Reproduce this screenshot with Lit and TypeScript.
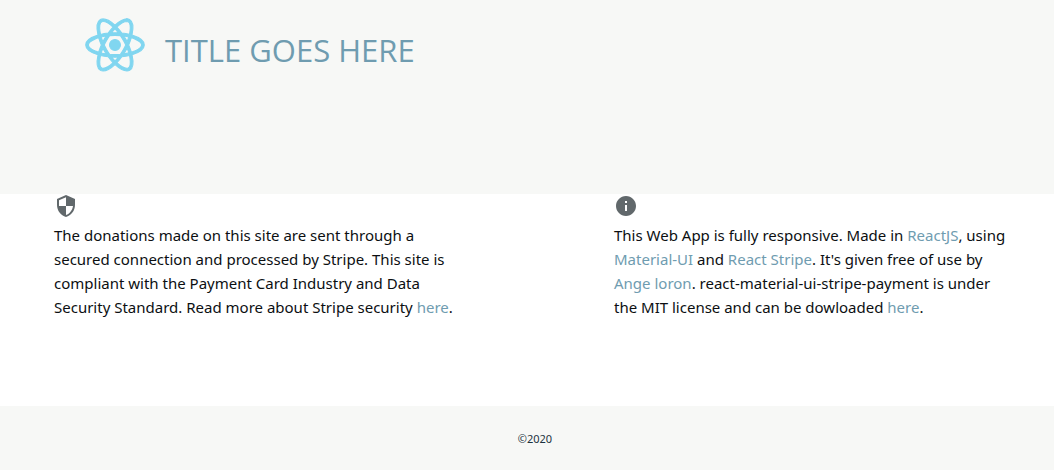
import { LitElement, html, css } from "lit";
import { customElement } from "lit/decorators.js";

@customElement("app-root")
export class AppRoot extends LitElement {
  static styles = css`
    :host {
      display: flex;
      flex-direction: column;
      min-height: 100vh;
      background: #fff;
      color: #0c0f12;
      font-family: "Segoe UI", "Noto Sans", "Open Sans", sans-serif;
      font-size: 15px;
      line-height: 24px;
    }
    header {
      display: flex;
      align-items: flex-start;
      box-sizing: border-box;
      min-height: 194px;
      padding: 5px 75px;
      background: #f7f8f6;
    }
    .logo {
      display: block;
      width: 80px;
      height: 80px;
      flex: none;
      fill: #80d6f0;
      stroke: #80d6f0;
      stroke-width: 9;
    }
    h1 {
      margin: 0;
      padding-left: 10px;
      color: #6f9cb0;
      font-family: "Segoe UI", "Open Sans", "Noto Sans", sans-serif;
      font-size: 31px;
      font-weight: 400;
      line-height: 90px;
    }
    main {
      display: grid;
      grid-template-columns: 1fr 1fr;
      column-gap: 160px;
      padding: 0 40px 0 54px;
      flex: 1;
    }
    .icon {
      display: block;
      width: 24px;
      height: 24px;
      fill: #61686b;
    }
    p {
      margin: 5px 0 0;
    }
    a {
      color: #6f9cb0;
      text-decoration: none;
    }
    footer {
      padding: 21px 0 19px 16px;
      background: #f7f8f6;
      color: #1c3340;
      font-size: 11px;
      text-align: center;
    }
  `;

  render() {
    return html`
      <header>
        <svg class="logo" viewBox="86 -38 670 670" aria-hidden="true">
          <path d="M666.3 296.5c0-32.5-40.7-63.3-103.1-82.4 14.4-63.6 8-114.2-20.2-130.4-6.5-3.8-14.1-5.6-22.4-5.6v22.3c4.6 0 8.3.9 11.4 2.6 13.6 7.8 19.5 37.5 14.9 75.7-1.1 9.4-2.9 19.3-5.1 29.4-19.6-4.8-41-8.5-63.5-10.9-13.5-18.5-27.5-35.3-41.6-50 32.6-30.3 63.2-46.9 84-46.9V78c-27.5 0-63.5 19.6-99.9 53.6-36.4-33.8-72.4-53.2-99.9-53.2v22.3c20.7 0 51.4 16.5 84 46.6-14 14.7-28 31.4-41.3 49.9-22.6 2.4-44 6.1-63.6 11-2.3-10-4-19.7-5.2-29-4.7-38.2 1.1-67.9 14.6-75.8 3-1.8 6.9-2.6 11.5-2.6V78.5c-8.4 0-16 1.8-22.6 5.6-28.1 16.2-34.4 66.7-19.9 130.1-62.2 19.2-102.7 49.9-102.7 82.3 0 32.5 40.7 63.3 103.1 82.4-14.4 63.6-8 114.2 20.2 130.4 6.5 3.8 14.1 5.6 22.5 5.6 27.5 0 63.5-19.6 99.9-53.6 36.4 33.8 72.4 53.2 99.9 53.2 8.4 0 16-1.8 22.6-5.6 28.1-16.2 34.4-66.7 19.9-130.1 62-19.1 102.5-49.9 102.5-82.3zm-130.2-66.7c-3.7 12.9-8.3 26.2-13.5 39.5-4.1-8-8.4-16-13.1-24-4.6-8-9.5-15.8-14.4-23.4 14.2 2.1 27.9 4.7 41 7.9zm-45.8 106.5c-7.8 13.5-15.8 26.3-24.1 38.2-14.9 1.3-30 2-45.2 2-15.1 0-30.2-.7-45-1.9-8.3-11.9-16.4-24.6-24.2-38-7.6-13.1-14.5-26.4-20.8-39.8 6.2-13.4 13.2-26.8 20.7-39.9 7.8-13.5 15.8-26.3 24.1-38.2 14.9-1.3 30-2 45.2-2 15.1 0 30.2.7 45 1.9 8.3 11.9 16.4 24.6 24.2 38 7.6 13.1 14.5 26.4 20.8 39.8-6.3 13.4-13.2 26.8-20.7 39.9zm32.3-13c5.4 13.4 10 26.8 13.8 39.8-13.1 3.2-26.9 5.9-41.2 8 4.9-7.7 9.8-15.6 14.4-23.7 4.6-8 8.9-16.1 13-24.1zM421.2 430c-9.3-9.6-18.6-20.3-27.8-32 9 .4 18.2.7 27.5.7 9.4 0 18.7-.2 27.8-.7-9 11.7-18.3 22.4-27.5 32zm-74.4-58.9c-14.2-2.1-27.9-4.7-41-7.9 3.7-12.9 8.3-26.2 13.5-39.5 4.1 8 8.4 16 13.1 24 4.7 8 9.5 15.8 14.4 23.4zM420.7 163c9.3 9.6 18.6 20.3 27.8 32-9-.4-18.2-.7-27.5-.7-9.4 0-18.7.2-27.8.7 9-11.7 18.3-22.4 27.5-32zm-74 58.9c-4.9 7.7-9.8 15.6-14.4 23.7-4.6 8-8.9 16-13 24-5.4-13.4-10-26.8-13.8-39.8 13.1-3.1 26.9-5.8 41.2-7.9zm-90.5 125.2c-35.4-15.1-58.3-34.9-58.3-50.6 0-15.7 22.9-35.6 58.3-50.6 8.6-3.7 18-7 27.7-10.1 5.7 19.6 13.2 40 22.5 60.9-9.2 20.8-16.6 41.1-22.2 60.6-9.9-3.1-19.3-6.5-28-10.2zM310 490c-13.6-7.8-19.5-37.5-14.9-75.7 1.1-9.4 2.9-19.3 5.1-29.4 19.6 4.8 41 8.5 63.5 10.9 13.5 18.5 27.5 35.3 41.6 50-32.6 30.3-63.2 46.9-84 46.9-4.5-.1-8.3-1-11.3-2.7zm237.2-76.2c4.7 38.2-1.1 67.9-14.6 75.8-3 1.8-6.9 2.6-11.5 2.6-20.7 0-51.4-16.5-84-46.6 14-14.7 28-31.4 41.3-49.9 22.6-2.4 44-6.1 63.6-11 2.3 10.1 4.1 19.8 5.2 29.1zm38.5-66.7c-8.6 3.7-18 7-27.7 10.1-5.7-19.6-13.2-40-22.5-60.9 9.2-20.8 16.6-41.1 22.2-60.6 9.9 3.1 19.3 6.5 28.1 10.2 35.4 15.1 58.3 34.9 58.3 50.6-.1 15.7-23 35.6-58.4 50.6z" />
          <circle cx="420.9" cy="296.5" r="45.7" />
        </svg>
        <h1>TITLE GOES HERE</h1>
      </header>
      <main>
        <section>
          <svg class="icon" viewBox="0 0 24 24" aria-hidden="true">
            <path d="M12 1L3 5v6c0 5.55 3.84 10.74 9 12 5.16-1.26 9-6.45 9-12V5l-9-4zm0 10.99h7c-.53 4.12-3.28 7.79-7 8.94V12H5V6.3l7-3.11v8.8z" />
          </svg>
          <p>
            The donations made on this site are sent through a secured connection
            and processed by Stripe. This site is compliant with the Payment Card
            Industry and Data Security Standard. Read more about Stripe security
            <a href="#security">here</a>.
          </p>
        </section>
        <section>
          <svg class="icon" viewBox="0 0 24 24" aria-hidden="true">
            <path d="M12 2C6.48 2 2 6.48 2 12s4.48 10 10 10 10-4.48 10-10S17.52 2 12 2zm1 15h-2v-6h2v6zm0-8h-2V7h2v2z" />
          </svg>
          <p>
            This Web App is fully responsive. Made in
            <a href="#reactjs">ReactJS</a>, using
            <a href="#material-ui">Material-UI</a> and
            <a href="#react-stripe">React Stripe</a>. It's given free of use by
            <a href="#author">Ange loron</a>. react-material-ui-stripe-payment is
            under the MIT license and can be dowloaded
            <a href="#download">here</a>.
          </p>
        </section>
      </main>
      <footer>©2020</footer>
    `;
  }
}
